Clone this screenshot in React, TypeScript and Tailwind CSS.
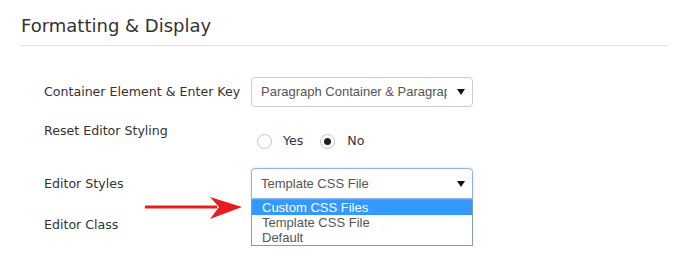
import React from "react";

const labelCls = "w-[207px] shrink-0 text-[12.6px] leading-[20px] text-[#333]";

const Caret = () => (
  <svg width="8" height="6" viewBox="0 0 8 6" className="shrink-0">
    <path d="M0 0 L8 0 L4 6 Z" fill="#111" />
  </svg>
);

const Radio = ({ checked }: { checked: boolean }) => (
  <span className="flex h-[15px] w-[15px] items-center justify-center rounded-full border border-[#c4c4c4] bg-white">
    {checked && <span className="h-[7px] w-[7px] rounded-full bg-[#222]" />}
  </span>
);

const App = () => {
  const options = ["Custom CSS Files", "Template CSS File", "Default"];

  return (
    <div
      className="relative h-[261px] w-[700px] overflow-hidden bg-white"
      style={{ fontFamily: '"DejaVu Sans", Verdana, sans-serif' }}
    >
      <div className="ml-[20px] mr-[32px] border-b border-[#e3e3e3] pt-[13px] pb-[6px]">
        <h2 className="pl-[1px] text-[18px] leading-[26px] text-[#333]">Formatting &amp; Display</h2>
      </div>

      <div className="pl-[44px]">
        {/* row 1 */}
        <div className="mt-[31px] flex h-[30px] items-center">
          <div className={labelCls}>Container Element &amp; Enter Key</div>
          <div
            className="flex h-[30px] w-[222px] items-center justify-between rounded-[4px] border border-[#ccc] pl-[9px] pr-[7px] text-[13px] text-[#555]"
            style={{ fontFamily: '"Liberation Sans", Arial, sans-serif' }}
          >
            <span className="w-[186px] overflow-hidden whitespace-nowrap">Paragraph Container &amp; Paragraph</span>
            <Caret />
          </div>
        </div>

        {/* row 2 */}
        <div className="mt-[14px] flex h-[30px]">
          <div className={labelCls}>Reset Editor Styling</div>
          <div className="flex items-center pt-[10px] text-[12.6px] leading-[20px] text-[#333]">
            <span className="ml-[6px]">
              <Radio checked={false} />
            </span>
            <span className="ml-[11px]">Yes</span>
            <span className="ml-[17px]">
              <Radio checked={true} />
            </span>
            <span className="ml-[12px]">No</span>
          </div>
        </div>

        {/* row 3 */}
        <div className="relative mt-[17px] flex h-[31px] items-center">
          <div className={labelCls}>Editor Styles</div>
          <div
            className="flex h-[31px] w-[222px] items-center justify-between rounded-t-[4px] border border-[#8fb3e6] pl-[9px] pr-[7px] text-[13px] text-[#555] shadow-[0_0_2px_rgba(102,175,233,0.5)]"
            style={{ fontFamily: '"Liberation Sans", Arial, sans-serif' }}
          >
            <span>Template CSS File</span>
            <Caret />
          </div>
          <div
            className="absolute left-[207px] top-[31px] z-10 w-[222px] border border-[#7f9db9] bg-white text-[13px]"
            style={{ fontFamily: '"Liberation Sans", Arial, sans-serif' }}
          >
            {options.map((o, i) => (
              <div
                key={o}
                className={
                  i === 0
                    ? "h-[15px] bg-[#3399ff] pl-[10px] leading-[15px] text-white"
                    : "h-[15px] pl-[10px] leading-[15px] text-[#555]"
                }
              >
                {o}
              </div>
            ))}
          </div>
        </div>

        {/* row 4 */}
        <div className="mt-[16px] flex h-[20px] items-center">
          <div className={labelCls}>Editor Class</div>
        </div>
      </div>

      <svg
        className="absolute left-[144px] top-[196px]"
        width="100"
        height="24"
        viewBox="0 0 100 24"
      >
        <rect x="1" y="9.5" width="72" height="3" fill="#e81c1c" />
        <path d="M66 1 L98 11 L66 23 L75 11 Z" fill="#e81c1c" />
      </svg>
    </div>
  );
};

export default App;
